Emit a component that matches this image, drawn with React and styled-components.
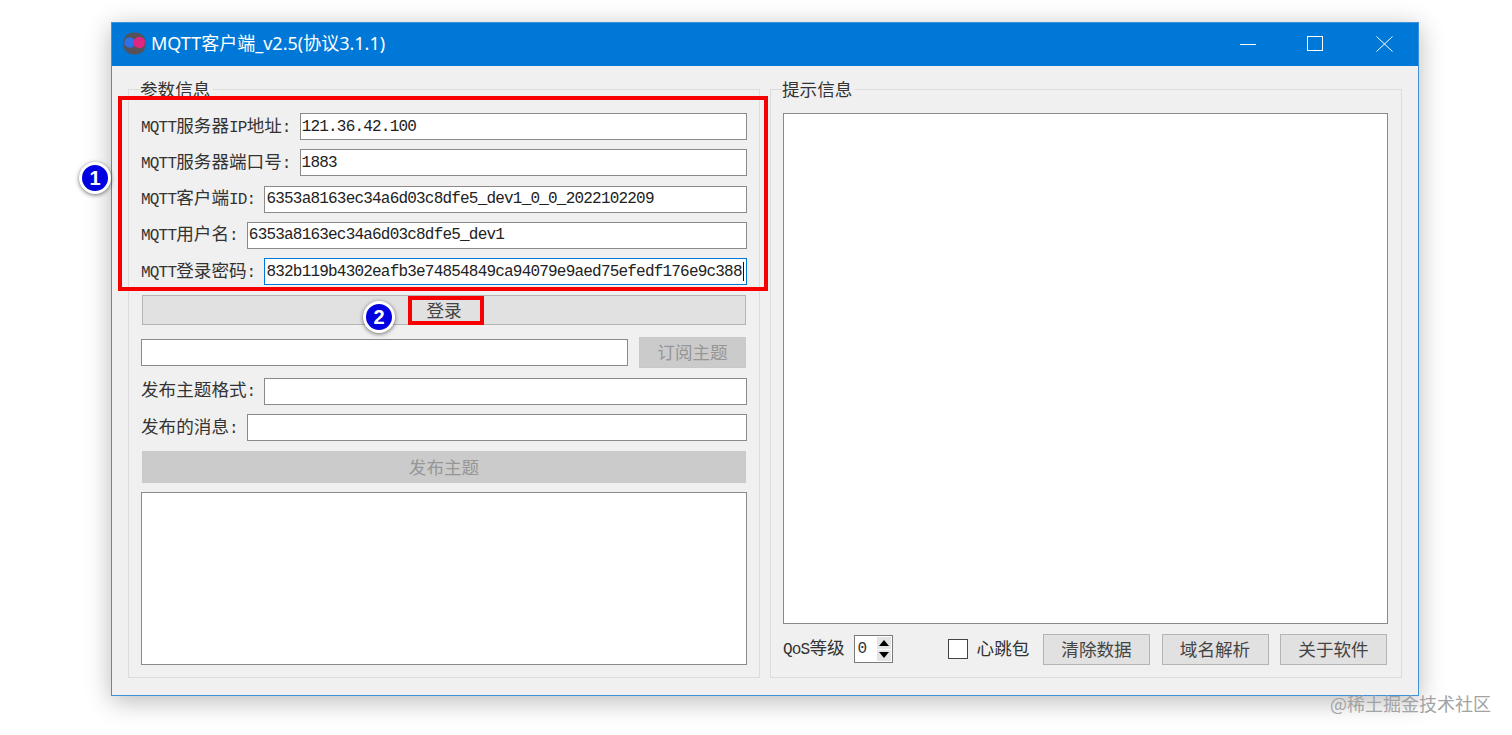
import styled, { createGlobalStyle } from 'styled-components';

const GlobalStyle = createGlobalStyle`
    html, body {
        margin: 0;
        background: #fff;
        overflow: hidden;
    }
    * {
        box-sizing: border-box;
    }
`

// CJK runs keep 17.6px, latin runs use half that advance like SimSun does
function Mixed({ text }) {
    return text.split(/([\x00-\x7f]+)/).map((part, i) =>
        i % 2 ? <Latin key={i}>{part}</Latin> : part
    );
}

function Field({ label, value, focused }) {
    return (
        <Row>
            {label && <Label><Mixed text={label} /></Label>}
            <FieldWrap>
                <Input readOnly defaultValue={value} $focused={focused} />
                {focused && <Caret />}
            </FieldWrap>
        </Row>
    );
}

function LeftPanel() {
    return (
        <Group>
            <Legend>参数信息</Legend>
            <Column>
                <Field label="MQTT服务器IP地址:" value="121.36.42.100" />
                <Field label="MQTT服务器端口号:" value="1883" />
                <Field label="MQTT客户端ID:" value="6353a8163ec34a6d03c8dfe5_dev1_0_0_2022102209" />
                <Field label="MQTT用户名:" value="6353a8163ec34a6d03c8dfe5_dev1" />
                <Field label="MQTT登录密码:" value="832b119b4302eafb3e74854849ca94079e9aed75efedf176e9c388" focused />
                <WideButton>登录</WideButton>
                <SubscribeRow>
                    <FieldWrap><Input readOnly defaultValue="" /></FieldWrap>
                    <SubscribeButton disabled>订阅主题</SubscribeButton>
                </SubscribeRow>
                <PublishRow>
                    <Label>发布主题格式<Latin>:</Latin></Label>
                    <FieldWrap><Input readOnly defaultValue="" /></FieldWrap>
                </PublishRow>
                <Field label="发布的消息:" value="" />
                <PublishButton disabled>发布主题</PublishButton>
                <TextBox readOnly defaultValue="" />
            </Column>
        </Group>
    );
}

function RightPanel() {
    return (
        <RightGroup>
            <Legend>提示信息</Legend>
            <Column>
                <TextBox readOnly defaultValue="" />
                <BottomBar>
                    <Label><Latin>QoS</Latin>等级</Label>
                    <Spin>
                        <SpinValue>0</SpinValue>
                        <SpinArrows>
                            <SpinArrow><UpTriangle /></SpinArrow>
                            <SpinArrow><DownTriangle /></SpinArrow>
                        </SpinArrows>
                    </Spin>
                    <Check />
                    <Label>心跳包</Label>
                    <ActionButtons>
                        <ActionButton>清除数据</ActionButton>
                        <ActionButton>域名解析</ActionButton>
                        <ActionButton>关于软件</ActionButton>
                    </ActionButtons>
                </BottomBar>
            </Column>
        </RightGroup>
    );
}

function App() {
    return (
        <Page>
            <GlobalStyle />
            <Window>
                <TitleBar>
                    <AppIcon viewBox="0 0 24 24">
                        <rect x="0.5" y="0.5" width="23" height="23" rx="10" fill="#55525a" />
                        <circle cx="7" cy="11" r="5.5" fill="#2f6fe8" />
                        <circle cx="17" cy="11" r="6" fill="#e0267f" />
                    </AppIcon>
                    <Title>MQTT客户端_v2.5(协议3.1.1)</Title>
                    <Controls>
                        <Control>
                            <svg width="16" height="16" viewBox="0 0 16 16">
                                <path d="M0 8.5H16" stroke="#fff" strokeWidth="1" />
                            </svg>
                        </Control>
                        <MaxControl>
                            <svg width="16" height="16" viewBox="0 0 16 16">
                                <rect x="0.5" y="0.5" width="15" height="14" fill="none" stroke="#fff" strokeWidth="1" />
                            </svg>
                        </MaxControl>
                        <Control>
                            <svg width="17" height="16" viewBox="0 0 17 16">
                                <path d="M0.5 0.5L16.5 15.5M16.5 0.5L0.5 15.5" stroke="#fff" strokeWidth="1" />
                            </svg>
                        </Control>
                    </Controls>
                </TitleBar>
                <Content>
                    <LeftPanel />
                    <RightPanel />
                </Content>
            </Window>

            <RedBox $x={118} $y={96} $w={650} $h={195} />
            <RedBox $x={408} $y={296} $w={76} $h={29} />
            <Badge $x={79} $y={162}>1</Badge>
            <Badge $x={363} $y={301}>2</Badge>
            <Watermark>@稀土掘金技术社区</Watermark>
        </Page>
    );
}

// Styles
const Page = styled.div`
    position: relative;
    width: 1512px;
    height: 735px;
    padding: 22px 0 0 111px;
    overflow: hidden;
    font-family: "Noto Sans CJK SC", sans-serif;
    font-size: 17.6px;
    color: #333;
`
const Window = styled.div`
    display: flex;
    flex-direction: column;
    width: 1308px;
    height: 674px;
    background: #f0f0f0;
    border: 1px solid #3d93d9;
    box-shadow: 0 5px 24px rgba(0, 0, 0, .28);
`
const TitleBar = styled.div`
    display: flex;
    align-items: center;
    flex: none;
    height: 43px;
    padding-left: 11px;
    background: #0078d7;
    color: #fff;
`
const AppIcon = styled.svg`
    width: 23px;
    height: 23px;
    flex: none;
    margin-bottom: 2px;
`
const Title = styled.div`
    margin-left: 5px;
    padding-bottom: 5px;
    font-family: "Noto Sans", "Noto Sans CJK SC", sans-serif;
    font-size: 18px;
`
const Controls = styled.div`
    display: flex;
    align-self: stretch;
    margin-left: auto;
    padding-bottom: 2px;
`
const Control = styled.div`
    display: flex;
    align-items: center;
    justify-content: center;
    width: 68px;
`
const MaxControl = styled(Control)`
    padding-right: 2px;
`
const Content = styled.div`
    display: flex;
    flex: 1;
    min-height: 0;
    gap: 10px;
    padding: 14px 15px 17px 16px;
`
const Group = styled.fieldset`
    display: flex;
    flex-direction: column;
    width: 632px;
    min-width: 0;
    margin: 0;
    padding: 15px 12px 12px;
    border: 1px solid #dcdcdc;
`
const RightGroup = styled(Group)`
    padding-right: 13px;
`
const Legend = styled.legend`
    padding: 0 3px 0 0;
    margin-left: -1px;
    height: 18px;
    line-height: 18px;
`
const Column = styled.div`
    display: flex;
    flex-direction: column;
    flex: 1;
    min-height: 0;
    gap: 9.33px;
`
const Row = styled.div`
    display: flex;
    align-items: center;
    gap: 9px;
    height: 27px;
    flex: none;
`
const SubscribeRow = styled(Row)`
    gap: 11px;
    height: 31px;
    margin-top: 2px;
    padding-right: 1px;
`
const PublishRow = styled(Row)`
    margin-top: 1px;
`
const Label = styled.span`
    padding-bottom: 2px;
    white-space: nowrap;
    line-height: 1;
`
const Latin = styled.span`
    font-family: "Liberation Mono", monospace;
    font-size: 16px;
    letter-spacing: -.8px;
`
const FieldWrap = styled.div`
    position: relative;
    flex: 1;
    min-width: 0;
    height: 27px;
`
const Input = styled.input`
    display: block;
    width: 100%;
    height: 100%;
    padding: 0 1px;
    border: 1px solid ${props => props.$focused ? "#0078d7" : "#8a8a8a"};
    outline: none;
    border-radius: 0;
    background: #fff;
    color: #222;
    font-family: "Liberation Mono", monospace;
    font-size: 16px;
    letter-spacing: -.8px;
`
const Caret = styled.span`
    position: absolute;
    top: 4px;
    right: 3px;
    width: 1px;
    height: 19px;
    background: #111;
`
const Button = styled.button`
    flex: none;
    width: 107px;
    height: 30px;
    padding: 0;
    border: 1px solid ${props => props.disabled ? "#c8c8c8" : "#b4b4b4"};
    border-radius: 0;
    background: ${props => props.disabled ? "#cbcbcb" : "#e1e1e1"};
    color: ${props => props.disabled ? "#969696" : "#444"};
    font: inherit;
    line-height: 1;
`
const WideButton = styled(Button)`
    width: auto;
    height: 30.67px;
    margin: 0 1px;
`
const SubscribeButton = styled(Button)`
    height: 31px;
`
const PublishButton = styled(WideButton)`
    height: 32px;
`
const ActionButton = styled(Button)`
    height: 31px;
`
const TextBox = styled.textarea`
    display: block;
    flex: 1;
    min-height: 0;
    width: 100%;
    resize: none;
    border: 1px solid #8a8a8a;
    border-radius: 0;
    outline: none;
    background: #fff;
`
const BottomBar = styled.div`
    display: flex;
    align-items: center;
    flex: none;
    height: 32px;
`
const Spin = styled.div`
    display: flex;
    width: 39px;
    height: 28px;
    margin-left: 9px;
    padding: 1px;
    border: 1px solid #7a7a7a;
    background: #fff;
`
const SpinValue = styled.span`
    flex: 1;
    padding-left: 2px;
    font-family: "Liberation Mono", monospace;
    font-size: 16px;
    line-height: 24px;
`
const SpinArrows = styled.div`
    display: flex;
    flex-direction: column;
    gap: 1px;
    width: 14px;
`
const SpinArrow = styled.div`
    display: flex;
    align-items: center;
    justify-content: center;
    flex: 1;
    background: #e4e4e4;
`
const UpTriangle = styled.span`
    border-left: 5px solid transparent;
    border-right: 5px solid transparent;
    border-bottom: 6px solid #000;
`
const DownTriangle = styled.span`
    border-left: 5px solid transparent;
    border-right: 5px solid transparent;
    border-top: 6px solid #000;
`
const Check = styled.span`
    flex: none;
    width: 20px;
    height: 20px;
    margin: 0 9px 0 55px;
    border: 1px solid #444;
    background: #fff;
`
const ActionButtons = styled.div`
    display: flex;
    gap: 11.5px;
    margin-left: auto;
    padding-right: 1px;
`
const RedBox = styled.div`
    position: absolute;
    left: ${props => props.$x}px;
    top: ${props => props.$y}px;
    width: ${props => props.$w}px;
    height: ${props => props.$h}px;
    border: 4px solid #f60000;
`
const Badge = styled.div`
    position: absolute;
    left: ${props => props.$x}px;
    top: ${props => props.$y}px;
    display: flex;
    align-items: center;
    justify-content: center;
    width: 32px;
    height: 32px;
    border: 3px solid #fff;
    border-radius: 50%;
    background: #0000e0;
    box-shadow: 0 1px 4px rgba(0, 0, 0, .55);
    color: #fff;
    font-family: "Liberation Sans", sans-serif;
    font-size: 20px;
    font-weight: 700;
`
const Watermark = styled.div`
    position: absolute;
    left: 1330px;
    top: 693px;
    color: #a3a3a3;
    font-size: 18px;
    line-height: 20px;
    white-space: nowrap;
`
export default App;
